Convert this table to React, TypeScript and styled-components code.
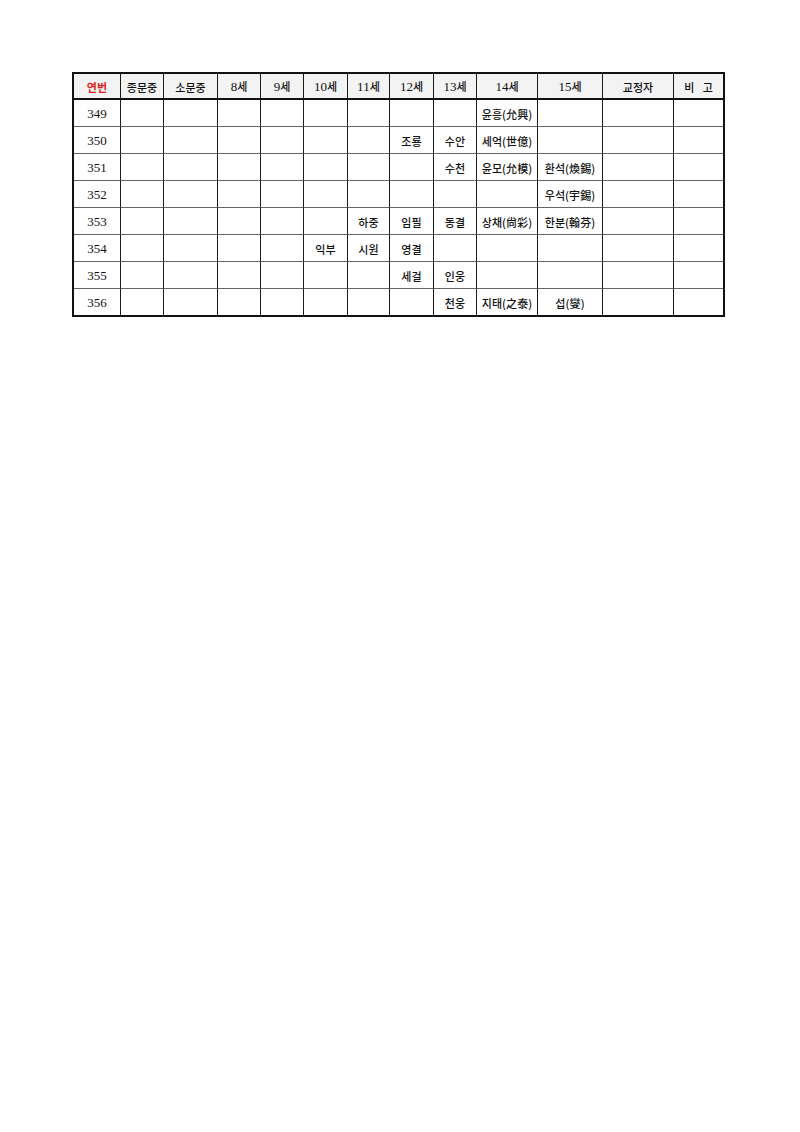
import React from "react";
import styled, { createGlobalStyle } from "styled-components";

const Global = createGlobalStyle`
  html, body { margin: 0; padding: 0; background: #fff; }
  body { font-family: "Liberation Serif", "Noto Sans CJK KR", serif; color: #111; }
`;

const Page = styled.div`
  width: 800px;
  height: 1132px;
  padding: 72px 0 0 72px;
  box-sizing: border-box;
`;

const COLS = [47, 43, 54, 43, 43, 44, 42, 44, 43, 61, 65, 71, 49];

const Grid = styled.div`
  display: inline-grid;
  grid-template-columns: ${COLS.map((c) => `${c}px`).join(" ")};
  border: 2px solid #111;
`;

const Cell = styled.div<{ $head?: boolean; $lastCol?: boolean; $lastRow?: boolean; $red?: boolean }>`
  box-sizing: border-box;
  display: flex;
  align-items: center;
  justify-content: center;
  height: ${(p) => (p.$head ? 26 : p.$lastRow ? 26 : 27)}px;
  background: ${(p) => (p.$head ? "#f3f3f3" : "#fff")};
  border-right: ${(p) => (p.$lastCol ? "none" : "1px solid #1a1a1a")};
  border-bottom: ${(p) =>
    p.$lastRow ? "none" : p.$head ? "2px solid #111" : "1px solid #666"};
  font-size: 13px;
  color: ${(p) => (p.$red ? "#e01f1f" : "#111")};
  white-space: nowrap;
  padding-top: 1px;
`;

const Ko = styled.span<{ $spread?: boolean; $bold?: boolean }>`
  font-family: "Noto Sans CJK KR", sans-serif;
  font-size: 11px;
  font-weight: ${(p) => (p.$bold ? 700 : 500)};
  letter-spacing: ${(p) => (p.$spread ? "3px" : "0.1px")};
  margin-right: ${(p) => (p.$spread ? "-3px" : "0")};
`;

const headers = ["연번", "종문중", "소문중", "8세", "9세", "10세", "11세", "12세", "13세", "14세", "15세", "교정자", "비 고"];

type Row = Record<number, string>;
const rows: { no: string; data: Row }[] = [
  { no: "349", data: { 9: "윤흥(允興)" } },
  { no: "350", data: { 7: "조룡", 8: "수안", 9: "세억(世億)" } },
  { no: "351", data: { 8: "수천", 9: "윤모(允模)", 10: "환석(煥錫)" } },
  { no: "352", data: { 10: "우석(宇錫)" } },
  { no: "353", data: { 6: "하중", 7: "임필", 8: "동결", 9: "상채(尙彩)", 10: "한분(翰芬)" } },
  { no: "354", data: { 5: "익부", 6: "시원", 7: "영결" } },
  { no: "355", data: { 7: "세걸", 8: "인웅" } },
  { no: "356", data: { 8: "천웅", 9: "지태(之泰)", 10: "섭(燮)" } },
];

function HeadLabel({ text, bold }: { text: string; bold?: boolean }) {
  const m = text.match(/^(\d+)(.*)$/);
  if (m) {
    return (
      <span>
        {m[1]}
        <Ko>{m[2]}</Ko>
      </span>
    );
  }
  return (
    <Ko $spread={text.includes(" ")} $bold={bold}>
      {text}
    </Ko>
  );
}

export default function App() {
  return (
    <Page>
      <Global />
      <Grid>
        {headers.map((h, i) => (
          <Cell key={h} $head $lastCol={i === headers.length - 1} $red={i === 0}>
            <HeadLabel text={h} bold={i === 0} />
          </Cell>
        ))}
        {rows.map((r, ri) =>
          COLS.map((_, ci) => (
            <Cell
              key={`${r.no}-${ci}`}
              $lastCol={ci === COLS.length - 1}
              $lastRow={ri === rows.length - 1}
            >
              {ci === 0 ? r.no : r.data[ci] ? <Ko>{r.data[ci]}</Ko> : null}
            </Cell>
          ))
        )}
      </Grid>
    </Page>
  );
}
